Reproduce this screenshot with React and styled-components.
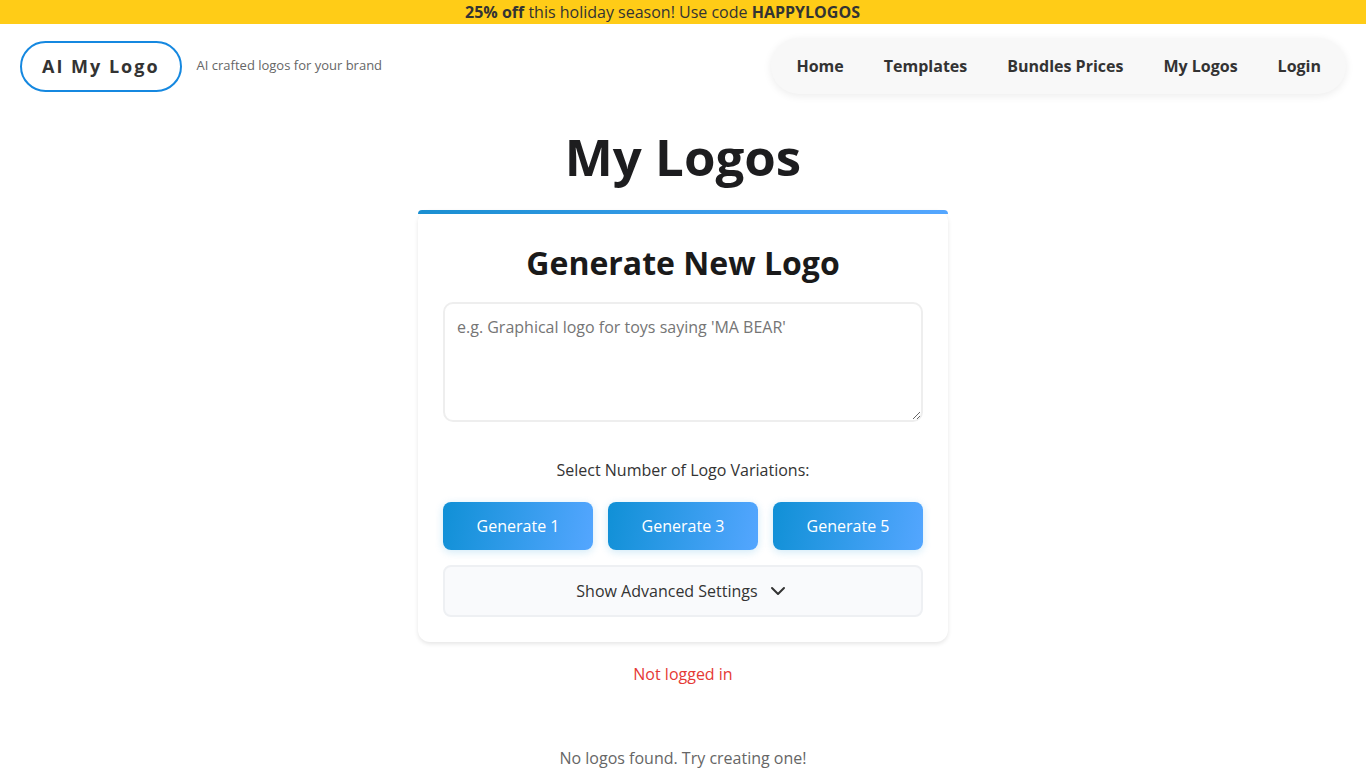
import React from "react";
import styled, { createGlobalStyle } from "styled-components";

const GlobalStyle = createGlobalStyle`
  *, *::before, *::after { box-sizing: border-box; }
  body {
    margin: 0;
    background: #fff;
    color: #333;
    font-family: "Open Sans", "Liberation Sans", sans-serif;
    font-size: 16px;
    line-height: 24px;
  }
  button, textarea { font: inherit; }
`;

const Banner = styled.div`
  padding: 0 41px 0 0;
  background: #ffcc17;
  color: #333;
  text-align: center;
`;

const Header = styled.header`
  display: flex;
  align-items: center;
  justify-content: space-between;
  padding: 14px 20px;
`;

const Brand = styled.div`
  display: flex;
  align-items: center;
  gap: 15px;
`;

const LogoLink = styled.a`
  padding: 11px 20px 12px;
  border: 2px solid #1588e0;
  border-radius: 26px;
  color: #333;
  font-size: 18px;
  font-weight: 700;
  letter-spacing: 2px;
  text-decoration: none;
`;

const Tagline = styled.span`
  padding-bottom: 2px;
  color: #666;
  font-size: 13px;
`;

const Nav = styled.nav`
  display: flex;
  gap: 40px;
  padding: 16px 25px;
  border-radius: 28px;
  background: #f8f8f8;
  box-shadow: 0 2px 8px rgba(0, 0, 0, 0.08);
`;

const NavLink = styled.a`
  color: #333;
  font-weight: 700;
  text-decoration: none;
`;

const Main = styled.main`
  display: flex;
  flex-direction: column;
  align-items: center;
  padding: 0 20px;
`;

const PageTitle = styled.h1`
  margin: 12px 0 18px;
  color: #1d1d1f;
  font-size: 51px;
  font-weight: 700;
  line-height: 72px;
`;

const Card = styled.form`
  position: relative;
  display: flex;
  flex-direction: column;
  width: 100%;
  max-width: 530px;
  padding: 25px;
  border-radius: 12px;
  background: #fff;
  box-shadow: 0 2px 4px rgba(0, 0, 0, 0.1);

  &::before {
    content: "";
    position: absolute;
    inset: 0 0 auto;
    height: 4px;
    border-radius: 12px 12px 0 0;
    background: linear-gradient(90deg, #1a8fd1, #54a6ff);
  }
`;

const CardTitle = styled.h2`
  margin: 4px 0 15px;
  color: #1a1a1a;
  font-size: 32px;
  font-weight: 700;
  line-height: 48px;
  text-align: center;
`;

const Prompt = styled.textarea`
  display: block;
  width: 100%;
  height: 120px;
  padding: 12px;
  border: 2px solid #eee;
  border-radius: 10px;
  background: #fff;
  color: #333;
  line-height: 22px;
  resize: vertical;

  &::placeholder { color: #757575; }
`;

const Variations = styled.fieldset`
  min-width: 0;
  margin: 36px 0 15px;
  padding: 0;
  border: 0;
`;

const Legend = styled.legend`
  width: 100%;
  padding: 0 0 20px;
  text-align: center;
`;

const ButtonRow = styled.div`
  display: grid;
  grid-template-columns: repeat(3, 1fr);
  gap: 15px;
`;

const GenerateButton = styled.button`
  height: 48px;
  padding: 0 12px;
  border: 0;
  border-radius: 8px;
  background: linear-gradient(100deg, #1090d6, #54a6ff);
  box-shadow: 0 2px 8px rgba(16, 144, 214, 0.2);
  color: #fff;
  cursor: pointer;
`;

const AdvancedButton = styled.button`
  display: flex;
  align-items: center;
  justify-content: center;
  gap: 12px;
  width: 100%;
  height: 52px;
  padding: 0 16px 0 12px;
  border: 2px solid #eef0f3;
  border-radius: 8px;
  background: #f9fafc;
  color: #333;
  cursor: pointer;
`;

const ErrorText = styled.p`
  margin: 20px 0 60px;
  color: #e53935;
`;

const EmptyText = styled.p`
  margin: 0;
  color: #666;
`;

const links = ["Home", "Templates", "Bundles Prices", "My Logos", "Login"];
const counts = [1, 3, 5];

function ChevronDown() {
  return (
    <svg width="16" height="16" viewBox="0 0 16 16" fill="none" stroke="currentColor" strokeWidth="2" strokeLinecap="round" strokeLinejoin="round" aria-hidden="true">
      <path d="M2 5l6 6 6-6" />
    </svg>
  );
}

export default function App() {
  return (
    <>
      <GlobalStyle />
      <Banner>
        <strong>25% off</strong> this holiday season! Use code <strong>HAPPYLOGOS</strong>
      </Banner>
      <Header>
        <Brand>
          <LogoLink href="#home">AI My Logo</LogoLink>
          <Tagline>AI crafted logos for your brand</Tagline>
        </Brand>
        <Nav>
          {links.map((label) => (
            <NavLink key={label} href={"#" + label.toLowerCase().replace(" ", "-")}>{label}</NavLink>
          ))}
        </Nav>
      </Header>
      <Main>
        <PageTitle>My Logos</PageTitle>
        <Card onSubmit={(e) => e.preventDefault()}>
          <CardTitle id="prompt-title">Generate New Logo</CardTitle>
          <Prompt aria-labelledby="prompt-title" placeholder="e.g. Graphical logo for toys saying 'MA BEAR'" />
          <Variations>
            <Legend>Select Number of Logo Variations:</Legend>
            <ButtonRow>
              {counts.map((n) => (
                <GenerateButton key={n} type="submit">Generate {n}</GenerateButton>
              ))}
            </ButtonRow>
          </Variations>
          <AdvancedButton type="button" aria-expanded="false">
            Show Advanced Settings
            <ChevronDown />
          </AdvancedButton>
        </Card>
        <ErrorText>Not logged in</ErrorText>
        <EmptyText>No logos found. Try creating one!</EmptyText>
      </Main>
    </>
  );
}
